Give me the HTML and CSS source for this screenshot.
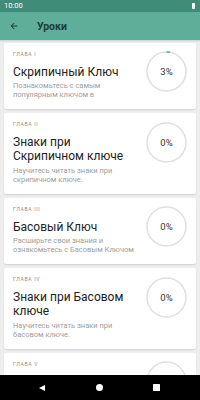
FILE: index.html
```html
<!DOCTYPE html>
<html lang="ru">
<head>
<meta charset="utf-8">
<title>Уроки</title>
<link rel="stylesheet" href="styles.css">
</head>
<body>
<div class="screen">
  <div class="statusbar">
    <span class="time">10:00</span>
    <span class="battery"></span>
  </div>
  <header class="toolbar">
    <svg class="back" viewBox="0 0 24 24" width="10" height="10"><path d="M20 11H7.83l5.59-5.59L12 4l-8 8 8 8 1.41-1.41L7.83 13H20v-2z" fill="currentColor"/></svg>
    <h1 class="title">Уроки</h1>
  </header>
  <main class="list">
    <section class="card">
      <div class="text">
        <div class="label">Глава I</div>
        <div class="name">Скрипичный Ключ</div>
        <div class="desc">Познакомьтесь с самым популярным ключом в</div>
      </div>
      <div class="progress">
        <svg viewBox="0 0 41 41" width="41" height="41"><circle class="track" cx="20.5" cy="20.5" r="19.5"/><circle class="arc" cx="20.5" cy="20.5" r="19.5" stroke-dasharray="3.7 200" transform="rotate(-90 20.5 20.5)"/></svg>
        <span class="pct">3%</span>
      </div>
    </section>
    <section class="card">
      <div class="text">
        <div class="label">Глава II</div>
        <div class="name">Знаки при Скрипичном ключе</div>
        <div class="desc">Научитесь читать знаки при скрипичном ключе.</div>
      </div>
      <div class="progress">
        <svg viewBox="0 0 41 41" width="41" height="41"><circle class="track" cx="20.5" cy="20.5" r="19.5"/></svg>
        <span class="pct">0%</span>
      </div>
    </section>
    <section class="card">
      <div class="text">
        <div class="label">Глава III</div>
        <div class="name">Басовый Ключ</div>
        <div class="desc">Расширьте свои знания и ознакомьтесь с Басовым Ключом</div>
      </div>
      <div class="progress">
        <svg viewBox="0 0 41 41" width="41" height="41"><circle class="track" cx="20.5" cy="20.5" r="19.5"/></svg>
        <span class="pct">0%</span>
      </div>
    </section>
    <section class="card">
      <div class="text">
        <div class="label">Глава IV</div>
        <div class="name">Знаки при Басовом ключе</div>
        <div class="desc">Научитесь читать знаки при басовом ключе.</div>
      </div>
      <div class="progress">
        <svg viewBox="0 0 41 41" width="41" height="41"><circle class="track" cx="20.5" cy="20.5" r="19.5"/></svg>
        <span class="pct">0%</span>
      </div>
    </section>
    <section class="card">
      <div class="text">
        <div class="label">Глава V</div>
      </div>
      <div class="progress">
        <svg viewBox="0 0 41 41" width="41" height="41"><circle class="track" cx="20.5" cy="20.5" r="19.5"/></svg>
      </div>
    </section>
  </main>
  <nav class="navbar">
    <span class="nav-back"></span>
    <span class="nav-home"></span>
    <span class="nav-recent"></span>
  </nav>
</div>
</body>
</html>
```
FILE: styles.css
```css
html, body {
  margin: 0;
  padding: 0;
}
body {
  font-family: Roboto, "Noto Sans", sans-serif;
  background: #eeeeee;
}
.screen {
  width: 200px;
  height: 400px;
  display: flex;
  flex-direction: column;
  overflow: hidden;
}
.statusbar {
  height: 12px;
  flex: none;
  background: #3f8c79;
  display: flex;
  align-items: center;
  justify-content: space-between;
  padding: 0 5px 0 4px;
}
.time {
  color: #ffffff;
  font-size: 7.5px;
  line-height: 12px;
}
.battery {
  width: 3.5px;
  height: 6px;
  background: #ffffff;
  border-radius: 0.8px;
}
.toolbar {
  height: 28px;
  flex: none;
  background: #5fae9a;
  display: flex;
  align-items: center;
  padding-left: 9px;
  color: #1d3b34;
  box-shadow: 0 1px 2px rgba(0,0,0,0.15);
  position: relative;
  z-index: 1;
}
.back {
  display: block;
}
.title {
  margin: 0 0 0 18px;
  font-size: 10.5px;
  font-weight: bold;
  color: #1d3b34;
}
.list {
  flex: 1;
  overflow: hidden;
  padding: 2.5px 4px 0;
  display: flex;
  flex-direction: column;
  gap: 4px;
}
.card {
  flex: none;
  background: #ffffff;
  border-radius: 2px;
  box-shadow: 0 1px 1.5px rgba(0,0,0,0.12);
  display: flex;
  align-items: flex-start;
  padding: 8px 9px 10px 9px;
}
.text {
  flex: 1;
  min-width: 0;
  padding-right: 8px;
}
.label {
  font-size: 5px;
  line-height: 6px;
  letter-spacing: 0.7px;
  text-transform: uppercase;
  color: #8c8c8c;
}
.name {
  margin-top: 8px;
  font-size: 12px;
  line-height: 14px;
  color: #222222;
}
.desc {
  margin-top: 2.5px;
  font-size: 7.5px;
  line-height: 9px;
  color: #9e9e9e;
}
.progress {
  flex: none;
  width: 41px;
  height: 41px;
  margin-top: 0.5px;
  position: relative;
}
.progress svg {
  display: block;
}
.track {
  fill: none;
  stroke: #e0e0e0;
  stroke-width: 1.5;
}
.arc {
  fill: none;
  stroke: #5fae9a;
  stroke-width: 1.5;
}
.pct {
  position: absolute;
  inset: 0;
  display: flex;
  align-items: center;
  justify-content: center;
  font-size: 9.5px;
  color: #333333;
}
.navbar {
  height: 25px;
  flex: none;
  background: #000000;
  display: flex;
  align-items: center;
  justify-content: space-between;
  padding: 0 40px 0 39px;
}
.nav-back {
  width: 0;
  height: 0;
  border-top: 3.5px solid transparent;
  border-bottom: 3.5px solid transparent;
  border-right: 6px solid #ffffff;
}
.nav-home {
  width: 7px;
  height: 7px;
  border-radius: 50%;
  background: #ffffff;
}
.nav-recent {
  width: 7px;
  height: 7px;
  border-radius: 0.5px;
  background: #ffffff;
}
```
